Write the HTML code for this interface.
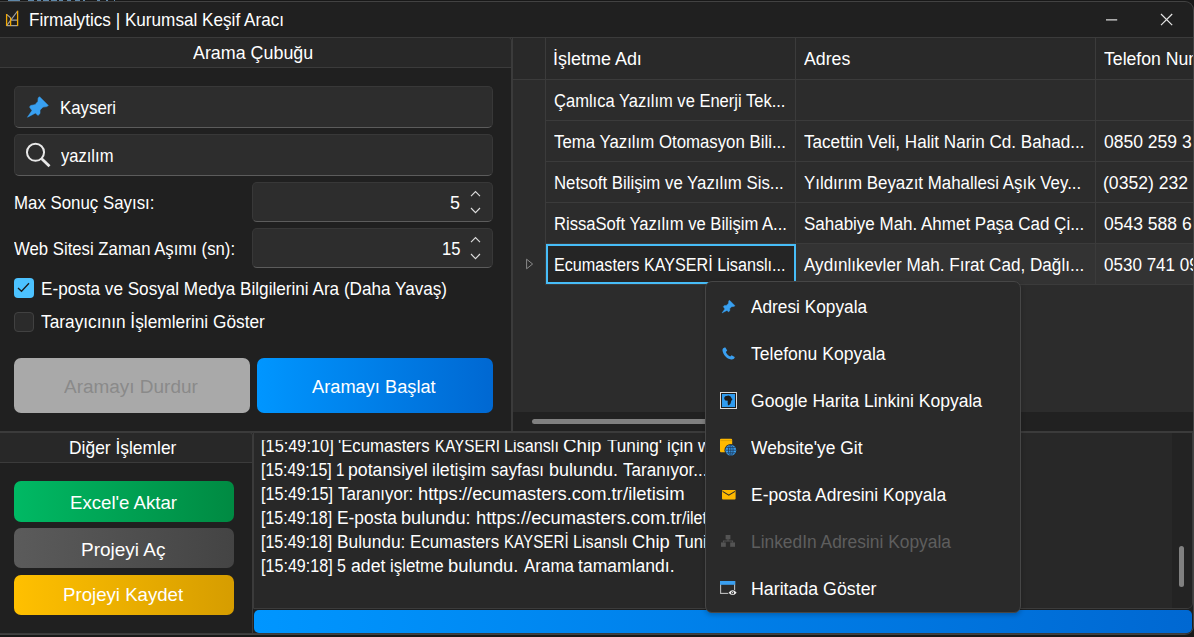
<!DOCTYPE html>
<html lang="tr"><head><meta charset="utf-8"><title>Firmalytics | Kurumsal Keşif Aracı</title>
<style>
html,body{margin:0;padding:0;background:#181818;overflow:hidden}
body{width:1194px;height:637px;position:relative;font-family:"Liberation Sans",sans-serif}
#win{position:absolute;left:0;top:1px;width:1194px;height:634px;box-sizing:border-box;background:#202020;overflow:hidden;border:1px solid #424242;border-left:none;border-radius:0 9px 9px 0}
#win>div,#win div,#menu div{position:absolute;box-sizing:border-box}
.t{position:absolute;white-space:pre;line-height:1;transform-origin:0 0;display:block}
svg{position:absolute;overflow:visible}
.inp{background:#2d2d2d;border:1px solid #383838;border-bottom-color:#5c5c5c;border-radius:5px}
.btn{border-radius:7px}
#menu{position:absolute;left:705px;top:281px;width:316px;height:332px;background:#2a2a2a;border:1px solid #464646;border-radius:7px;box-sizing:border-box;box-shadow:0 2px 5px rgba(0,0,0,.22)}
</style></head><body>
<i style="position:absolute;left:8px;top:0;width:12px;height:1px;background:#5f87a8"></i><i style="position:absolute;left:28px;top:0;width:6px;height:1px;background:#5f87a8"></i><i style="position:absolute;left:37px;top:0;width:4px;height:1px;background:#5f87a8"></i><i style="position:absolute;left:43px;top:0;width:6px;height:1px;background:#5f87a8"></i><i style="position:absolute;left:51px;top:0;width:6px;height:1px;background:#5f87a8"></i><i style="position:absolute;left:59px;top:0;width:4px;height:1px;background:#5f87a8"></i><i style="position:absolute;left:67px;top:0;width:4px;height:1px;background:#5f87a8"></i><i style="position:absolute;left:75px;top:0;width:5px;height:1px;background:#5f87a8"></i><i style="position:absolute;left:83px;top:0;width:2px;height:1px;background:#5f87a8"></i><i style="position:absolute;left:97px;top:0;width:3px;height:1px;background:#5f87a8"></i><i style="position:absolute;left:106px;top:0;width:2px;height:1px;background:#5f87a8"></i><i style="position:absolute;left:114px;top:0;width:1px;height:1px;background:#5f87a8"></i>
<div id="win">
<div style="left:0px;top:35px;width:1193px;height:1px;background:#3b3b3b"></div>
<svg style="left:5px;top:7px" width="16" height="19" viewBox="5 9 16 19">
<g fill="none" stroke-width="1.2">
<path d="M6.6 14.4 L10.6 17.8 M17.6 11 L6.8 25.4 M10.6 20.2 H17.6 M6.6 25.7 H17.6" stroke="#a0a0a0"/>
<path d="M6.6 14 V26 M10.6 17.4 V26 M17.6 10.8 V26" stroke="#f2a900" stroke-width="1.3"/>
</g></svg>
<span class="t" style="left:28.59px;top:9.00px;font-size:18.2px;color:#ffffff;transform:scaleX(0.9427)">Firmalytics | Kurumsal Keşif Aracı</span><svg style="left:1100px;top:8px" width="80" height="20" viewBox="1100 10 80 20">
<path d="M1106 19.8 H1117.2" stroke="#d8d8d8" stroke-width="1.3" fill="none"/>
<path d="M1161 14 L1172.2 25.2 M1172.2 14 L1161 25.2" stroke="#e4e4e4" stroke-width="1.2" fill="none"/>
</svg>
<div style="left:-2px;top:35px;width:514px;height:31px;background:#282828;border:1px solid #3b3b3b;border-radius:0 4px 0 0;border-left:none"></div>
<div style="left:511px;top:42px;width:1px;height:388px;background:#3b3b3b"></div>
<div style="left:512px;top:36px;width:1px;height:394px;background:#3b3b3b"></div>
<span class="t" style="left:192.97px;top:42.00px;font-size:18.2px;color:#ffffff;transform:scaleX(0.9827)">Arama Çubuğu</span><div class="inp" style="left:14px;top:84px;width:479px;height:42px;"></div>
<div class="inp" style="left:14px;top:132px;width:479px;height:42px;"></div>
<div class="inp" style="left:252px;top:180px;width:241px;height:40px;"></div>
<div class="inp" style="left:252px;top:226px;width:241px;height:40px;"></div>
<svg style="left:27px;top:94px" width="22" height="22" viewBox="0 0 22 22"><polygon points="12.5,0.7 21.3,9.5 19.7,10.6 16.0,11.1 13.0,14.0 13.0,17.5 10.9,19.4 8.5,17.0 0.5,21.2 5.0,14.6 2.6,11.1 3.7,9.5 8.0,8.7 10.9,5.5 11.2,2.0" fill="#38a0f1" stroke="#38a0f1" stroke-width="0.6" stroke-linejoin="round"/></svg>
<span class="t" style="left:59.92px;top:97.00px;font-size:18.2px;color:#ffffff;transform:scaleX(0.9251)">Kayseri</span><svg style="left:24px;top:138px" width="30" height="30" viewBox="24 140 30 30">
<circle cx="35.5" cy="152.3" r="8.55" fill="none" stroke="#e8e8e8" stroke-width="2"/>
<path d="M41.7 158.8 L49.5 166.3" stroke="#e8e8e8" stroke-width="2.8"/>
</svg>
<span class="t" style="left:60.96px;top:145.00px;font-size:18.2px;color:#ffffff;transform:scaleX(0.9101)">yazılım</span><span class="t" style="left:13.92px;top:192.00px;font-size:18.2px;color:#ffffff;transform:scaleX(0.9260)">Max Sonuç Sayısı:</span><span class="t" style="left:13.93px;top:238.00px;font-size:18.2px;color:#ffffff;transform:scaleX(0.9204)">Web Sitesi Zaman Aşımı (sn):</span><span class="t" style="left:450.08px;top:192.00px;font-size:18.2px;color:#ffffff;transform:scaleX(0.9847)">5</span><span class="t" style="left:441.54px;top:238.00px;font-size:18.2px;color:#ffffff;transform:scaleX(0.9124)">15</span><svg style="left:468px;top:188px" width="16" height="24" viewBox="0 0 16 24">
<path d="M3 6.2 L7.5 1.6 L12 6.2 M3 18 L7.5 22.6 L12 18" fill="none" stroke="#dcdcdc" stroke-width="1.15"/>
</svg>
<svg style="left:468px;top:234px" width="16" height="24" viewBox="0 0 16 24">
<path d="M3 6.2 L7.5 1.6 L12 6.2 M3 18 L7.5 22.6 L12 18" fill="none" stroke="#dcdcdc" stroke-width="1.15"/>
</svg>
<div style="left:14px;top:276px;width:20px;height:20px;background:#4cc2ff;border-radius:4px"></div>
<svg style="left:14px;top:276px" width="20" height="20" viewBox="0 0 20 20">
<path d="M4 10 L7.5 13.3 L15 5.3" fill="none" stroke="#1a1a1a" stroke-width="1.3"/></svg>
<div style="left:14px;top:310px;width:20px;height:20px;background:#2b2b2b;border:1px solid #414141;border-radius:4px"></div>
<span class="t" style="left:40.79px;top:278.00px;font-size:18.2px;color:#ffffff;transform:scaleX(0.9422)">E-posta ve Sosyal Medya Bilgilerini Ara (Daha Yavaş)</span><span class="t" style="left:41.41px;top:311.00px;font-size:18.2px;color:#ffffff;transform:scaleX(0.9506)">Tarayıcının İşlemlerini Göster</span><div class="btn" style="left:14px;top:356.4px;width:235.5px;height:54.4px;background:#a9a9a9"></div>
<span class="t" style="left:64.16px;top:376.00px;font-size:18.8px;color:#8a8a8a;transform:scaleX(1.0097)">Aramayı Durdur</span><div class="btn" style="left:256.5px;top:356.4px;width:236px;height:54.4px;background:linear-gradient(90deg,#0096ff,#0068d2)"></div>
<span class="t" style="left:311.56px;top:376.00px;font-size:18.8px;color:#ffffff;transform:scaleX(0.9711)">Aramayı Başlat</span><div style="left:513px;top:36px;width:680px;height:374px;background:#2c2c2c"></div>
<div style="left:513px;top:36px;width:680px;height:41px;background:#292929"></div>
<div style="left:546px;top:242px;width:647px;height:40px;background:#333333"></div>
<div style="left:513px;top:77px;width:680px;height:1px;background:#3b3b3b"></div>
<div style="left:546px;top:118px;width:647px;height:1px;background:#3b3b3b"></div>
<div style="left:546px;top:159px;width:647px;height:1px;background:#3b3b3b"></div>
<div style="left:546px;top:200px;width:647px;height:1px;background:#3b3b3b"></div>
<div style="left:546px;top:241px;width:647px;height:1px;background:#3b3b3b"></div>
<div style="left:546px;top:282px;width:647px;height:1px;background:#3b3b3b"></div>
<div style="left:545px;top:36px;width:1px;height:247px;background:#3b3b3b"></div>
<div style="left:795px;top:36px;width:1px;height:247px;background:#3b3b3b"></div>
<div style="left:1095px;top:36px;width:1px;height:247px;background:#3b3b3b"></div>
<div style="left:546px;top:242px;width:249.5px;height:40px;background:#252525;border:2px solid #47bdf8"></div>
<svg style="left:524px;top:254px" width="12" height="16" viewBox="524 256 12 16">
<path d="M526.6 259.2 L532.6 264 L526.6 268.8 Z" fill="none" stroke="#8a8a8a" stroke-width="1"/></svg>
<span class="t" style="left:552.54px;top:48.00px;font-size:18px;color:#ffffff;transform:scaleX(0.9980)">İşletme Adı</span><span class="t" style="left:803.97px;top:48.00px;font-size:18px;color:#ffffff;transform:scaleX(0.9839)">Adres</span><span class="t" style="left:1103.90px;top:48.00px;font-size:18px;color:#ffffff;transform:scaleX(0.9800)">Telefon Num</span><span class="t" style="left:553.56px;top:90.00px;font-size:18px;color:#ffffff;transform:scaleX(0.9181)">Çamlıca Yazılım ve Enerji Tek...</span><span class="t" style="left:554.02px;top:131.00px;font-size:18px;color:#ffffff;transform:scaleX(0.9335)">Tema Yazılım Otomasyon Bili...</span><span class="t" style="left:804.02px;top:131.00px;font-size:18px;color:#ffffff;transform:scaleX(0.9505)">Tacettin Veli, Halit Narin Cd. Bahad...</span><span class="t" style="left:1103.52px;top:131.00px;font-size:18px;color:#ffffff;transform:scaleX(0.9740)">0850 259 3</span><span class="t" style="left:554.12px;top:172.00px;font-size:18px;color:#ffffff;transform:scaleX(0.9326)">Netsoft Bilişim ve Yazılım Sis...</span><span class="t" style="left:804.03px;top:172.00px;font-size:18px;color:#ffffff;transform:scaleX(0.9372)">Yıldırım Beyazıt Mahallesi Aşık Vey...</span><span class="t" style="left:1103.11px;top:172.00px;font-size:18px;color:#ffffff;transform:scaleX(0.9770)">(0352) 232</span><span class="t" style="left:554.14px;top:213.00px;font-size:18px;color:#ffffff;transform:scaleX(0.9230)">RissaSoft Yazılım ve Bilişim A...</span><span class="t" style="left:803.63px;top:213.00px;font-size:18px;color:#ffffff;transform:scaleX(0.9433)">Sahabiye Mah. Ahmet Paşa Cad Çi...</span><span class="t" style="left:1103.52px;top:213.00px;font-size:18px;color:#ffffff;transform:scaleX(0.9740)">0543 588 6</span><span class="t" style="left:554.17px;top:254.00px;font-size:18px;color:#ffffff;transform:scaleX(0.8985)">Ecumasters KAYSERİ Lisanslı...</span><span class="t" style="left:804.37px;top:254.00px;font-size:18px;color:#ffffff;transform:scaleX(0.9505)">Aydınlıkevler Mah. Fırat Cad, Dağlı...</span><span class="t" style="left:1103.53px;top:254.00px;font-size:18px;color:#ffffff;transform:scaleX(0.9467)">0530 741 09</span><div style="left:513px;top:410px;width:680px;height:20px;background:#212121"></div>
<div style="left:532px;top:417px;width:420px;height:5px;background:#808080;border-radius:3px"></div>
<div style="left:0px;top:429px;width:1193px;height:2px;background:#3b3b3b"></div>
<div style="left:-2px;top:430px;width:255px;height:31px;background:#282828;border:1px solid #3b3b3b;border-radius:0 4px 0 0;border-left:none"></div>
<div style="left:252px;top:438px;width:1px;height:193px;background:#3b3b3b"></div>
<span class="t" style="left:69.17px;top:437.00px;font-size:18.2px;color:#ffffff;transform:scaleX(0.9575)">Diğer İşlemler</span><div class="btn" style="left:14px;top:479px;width:220px;height:41px;background:linear-gradient(90deg,#00b964,#008a42)"></div>
<div class="btn" style="left:14px;top:526px;width:220px;height:40px;background:linear-gradient(90deg,#5b5b5b,#444444)"></div>
<div class="btn" style="left:14px;top:572.5px;width:220px;height:40.5px;background:linear-gradient(90deg,#ffc000,#d69d00)"></div>
<span class="t" style="left:70.07px;top:492.00px;font-size:18.6px;color:#ffffff;transform:scaleX(1.0012)">Excel'e Aktar</span><span class="t" style="left:81.44px;top:539.00px;font-size:18.6px;color:#ffffff;transform:scaleX(1.0214)">Projeyi Aç</span><span class="t" style="left:62.97px;top:584.00px;font-size:18.6px;color:#ffffff;transform:scaleX(1.0023)">Projeyi Kaydet</span><div style="left:253px;top:430px;width:940px;height:177px;background:#282828;border:1px solid #3b3b3b;border-radius:0 0 6px 0"></div>
<div style="left:1172px;top:431px;width:20px;height:175px;background:#232323;border-radius:0 0 5px 0"></div>
<div style="left:1179px;top:544px;width:5px;height:41px;background:#808080;border-radius:3px"></div>
<div style="left:0;top:438px;width:1172px;height:168px;overflow:hidden"><span class="t" style="left:261.14px;top:-3.00px;font-size:18px;color:#ffffff;transform:scaleX(0.9078)">[15:49:10] </span><span class="t" style="left:338.35px;top:-3.00px;font-size:18px;color:#ffffff;transform:scaleX(0.9295)">'Ecumasters </span><span class="t" style="left:434.65px;top:-3.00px;font-size:18px;color:#ffffff;transform:scaleX(0.8457)">KAYSERİ </span><span class="t" style="left:503.67px;top:-3.00px;font-size:18px;color:#ffffff;transform:scaleX(0.8995)">Lisanslı </span><span class="t" style="left:562.95px;top:-3.00px;font-size:18px;color:#ffffff;transform:scaleX(1.0404)">Chip </span><span class="t" style="left:606.71px;top:-3.00px;font-size:18px;color:#ffffff;transform:scaleX(0.9526)">Tuning' </span><span class="t" style="left:666.53px;top:-3.00px;font-size:18px;color:#ffffff;transform:scaleX(0.9712)">için </span><span class="t" style="left:697.63px;top:-3.00px;font-size:18px;color:#ffffff;transform:scaleX(0.9870)">w</span><span class="t" style="left:261.17px;top:21.00px;font-size:18px;color:#ffffff;transform:scaleX(0.8830)">[15:49:15] </span><span class="t" style="left:336.35px;top:21.00px;font-size:18px;color:#ffffff;transform:scaleX(0.8400)">1 </span><span class="t" style="left:347.66px;top:21.00px;font-size:18px;color:#ffffff;transform:scaleX(0.9837)">potansiyel </span><span class="t" style="left:432.32px;top:21.00px;font-size:18px;color:#ffffff;transform:scaleX(0.9796)">iletişim </span><span class="t" style="left:491.13px;top:21.00px;font-size:18px;color:#ffffff;transform:scaleX(0.9284)">sayfası </span><span class="t" style="left:548.64px;top:21.00px;font-size:18px;color:#ffffff;transform:scaleX(0.9983)">bulundu. </span><span class="t" style="left:622.62px;top:21.00px;font-size:18px;color:#ffffff;transform:scaleX(0.9494)">Taranıyor...</span><span class="t" style="left:261.15px;top:45.00px;font-size:18px;color:#ffffff;transform:scaleX(0.8991)">[15:49:15] </span><span class="t" style="left:337.62px;top:45.00px;font-size:18px;color:#ffffff;transform:scaleX(0.9407)">Taranıyor: </span><span class="t" style="left:417.53px;top:45.00px;font-size:18px;color:#ffffff;transform:scaleX(1.0168)">https:</span><span class="t" style="left:462.30px;top:45.00px;font-size:18px;color:#ffffff;transform:scaleX(1.0168)">//ecumasters.com.tr</span><span class="t" style="left:623.00px;top:45.00px;font-size:18px;color:#ffffff;transform:scaleX(1.0250)">/iletisim</span><span class="t" style="left:261.16px;top:69.00px;font-size:18px;color:#ffffff;transform:scaleX(0.8878)">[15:49:18] </span><span class="t" style="left:336.58px;top:69.00px;font-size:18px;color:#ffffff;transform:scaleX(0.9651)">E-posta </span><span class="t" style="left:401.23px;top:69.00px;font-size:18px;color:#ffffff;transform:scaleX(1.0072)">bulundu: </span><span class="t" style="left:475.83px;top:69.00px;font-size:18px;color:#ffffff;transform:scaleX(1.0214)">https:</span><span class="t" style="left:520.80px;top:69.00px;font-size:18px;color:#ffffff;transform:scaleX(1.0174)">//ecumasters.com.tr</span><span class="t" style="left:681.60px;top:69.00px;font-size:18px;color:#ffffff;transform:scaleX(0.8930)">/ilet</span><span class="t" style="left:261.16px;top:93.00px;font-size:18px;color:#ffffff;transform:scaleX(0.8878)">[15:49:18] </span><span class="t" style="left:336.58px;top:93.00px;font-size:18px;color:#ffffff;transform:scaleX(0.9624)">Bulundu: </span><span class="t" style="left:409.82px;top:93.00px;font-size:18px;color:#ffffff;transform:scaleX(0.9377)">Ecumasters </span><span class="t" style="left:503.75px;top:93.00px;font-size:18px;color:#ffffff;transform:scaleX(0.8433)">KAYSERİ </span><span class="t" style="left:572.58px;top:93.00px;font-size:18px;color:#ffffff;transform:scaleX(0.8964)">Lisanslı </span><span class="t" style="left:631.67px;top:93.00px;font-size:18px;color:#ffffff;transform:scaleX(1.0187)">Chip </span><span class="t" style="left:674.53px;top:93.00px;font-size:18px;color:#ffffff;transform:scaleX(0.9193)">Tuni</span><span class="t" style="left:261.15px;top:117.00px;font-size:18px;color:#ffffff;transform:scaleX(0.8957)">[15:49:18] </span><span class="t" style="left:337.36px;top:117.00px;font-size:18px;color:#ffffff;transform:scaleX(0.8898)">5 </span><span class="t" style="left:350.65px;top:117.00px;font-size:18px;color:#ffffff;transform:scaleX(0.9806)">adet </span><span class="t" style="left:389.97px;top:117.00px;font-size:18px;color:#ffffff;transform:scaleX(0.9391)">işletme </span><span class="t" style="left:448.12px;top:117.00px;font-size:18px;color:#ffffff;transform:scaleX(1.0198)">bulundu. </span><span class="t" style="left:523.67px;top:117.00px;font-size:18px;color:#ffffff;transform:scaleX(0.9422)">Arama </span><span class="t" style="left:578.33px;top:117.00px;font-size:18px;color:#ffffff;transform:scaleX(0.9750)">tamamlandı.</span></div>
<div style="left:0px;top:631px;width:1193px;height:1px;background:#3b3b3b"></div>
<div style="left:253.7px;top:607.8px;width:938.5px;height:23.4px;background:linear-gradient(90deg,#0096ff,#0068d2);border-radius:5px"></div>
</div>
<div id="menu">
<span class="t" style="left:45.47px;top:17.00px;font-size:17.6px;color:#ffffff;transform:scaleX(0.9813)">Adresi Kopyala</span><span class="t" style="left:45.11px;top:64.00px;font-size:17.6px;color:#ffffff;transform:scaleX(0.9970)">Telefonu Kopyala</span><span class="t" style="left:44.62px;top:111.00px;font-size:17.6px;color:#ffffff;transform:scaleX(0.9969)">Google Harita Linkini Kopyala</span><span class="t" style="left:45.42px;top:158.00px;font-size:17.6px;color:#ffffff;transform:scaleX(0.9907)">Website'ye Git</span><span class="t" style="left:45.17px;top:205.00px;font-size:17.6px;color:#ffffff;transform:scaleX(0.9926)">E-posta Adresini Kopyala</span><span class="t" style="left:45.17px;top:252.00px;font-size:17.6px;color:#5e5e5e;transform:scaleX(0.9874)">LinkedIn Adresini Kopyala</span><span class="t" style="left:45.14px;top:299.00px;font-size:17.6px;color:#ffffff;transform:scaleX(1.0102)">Haritada Göster</span><svg style="left:16px;top:18px" width="13" height="13" viewBox="0 0 13 13"><polygon points="7.50,0.20 13.00,5.70 12.00,6.39 9.69,6.70 7.81,8.51 7.81,10.70 6.50,11.89 5.00,10.39 0.00,13.01 2.81,8.89 1.31,6.70 2.00,5.70 4.69,5.20 6.50,3.20 6.69,1.01" fill="#38a0f1" stroke="#38a0f1" stroke-width="0.4" stroke-linejoin="round"/></svg>
<svg style="left:16px;top:65px" width="13" height="13" viewBox="0 0 13 13"><path d="M2.6 0.4 C1.2 0.8 0.3 1.8 0.5 3.4 C1 7.6 4.6 11.6 9.2 12.5 C10.8 12.8 12.2 12 12.7 10.6 L12.7 9.9 L9.6 8.2 L8.2 9.4 C6.4 8.6 4.6 6.8 3.9 4.9 L5.2 3.6 L3.4 0.4 Z" fill="#3a9ff0"/></svg>
<svg style="left:14px;top:110px" width="17" height="17" viewBox="0 0 17 17"><rect x="0.5" y="0.5" width="16" height="16" fill="#1c1c1c" stroke="#dcdcdc" stroke-width="1"/><rect x="2" y="2" width="13" height="13" fill="#2f9bef"/><path d="M5.2 4.2 L8.6 3.6 L10.6 4.6 L11.8 6.8 L12.6 6.9 L11.2 9 L10.6 11.6 L9 13.2 L8 13.2 L7.6 10.4 L7.8 8.8 L5.4 8.6 L4.2 7 L4.4 5.2 Z" fill="#1c1c1c"/></svg>
<svg style="left:14px;top:156px" width="17" height="18" viewBox="0 0 17 18"><path d="M1 0.8 H11 A1.2 1.2 0 0 1 12.2 2 V14.2 H1 A1 1 0 0 1 0 13.2 V1.8 A1 1 0 0 1 1 0.8 Z" fill="#ffb900"/><path d="M0.4 2.6 H12" stroke="#d89c00" stroke-width="0.8"/><circle cx="10.8" cy="12.2" r="6.3" fill="#2b2b2b"/><circle cx="10.8" cy="12.2" r="5.4" fill="#3a9ff0"/><g fill="none" stroke="#1e3a5a" stroke-width="0.8"><ellipse cx="10.8" cy="12.2" rx="2.3" ry="5.2"/><path d="M5.6 12.2 H16 M10.8 7 V17.4 M6.4 9.6 H15.2 M6.4 14.8 H15.2"/></g></svg>
<svg style="left:15.5px;top:207.5px" width="14" height="10" viewBox="0 0 14 10"><rect x="0" y="0" width="13.6" height="9.6" rx="1" fill="#ffb900"/><path d="M0.6 1.4 L6.8 5.2 L13 1.4" fill="none" stroke="#2b2b2b" stroke-width="1.1"/></svg>
<svg style="left:15px;top:253px" width="14" height="12" viewBox="0 0 14 12"><g fill="#545454"><rect x="4.6" y="0" width="4.8" height="4.4"/><rect x="0" y="7.4" width="4.8" height="4.4"/><rect x="9.2" y="7.4" width="4.8" height="4.4"/><path d="M6.5 4 h1 v1.6 h4.6 v2 h-1 v-1 h-8.2 v1 h-1 v-2 h4.6 Z"/></g></svg>
<svg style="left:14px;top:299px" width="18" height="17" viewBox="0 0 18 17"><rect x="0.6" y="0.6" width="14" height="11.8" fill="none" stroke="#bdbdbd" stroke-width="1.1"/><rect x="0" y="0" width="15.2" height="3.8" fill="#3a9ff0"/><path d="M7.4 11.7 Q12.6 5.2 17.8 11.7 Q12.6 18.2 7.4 11.7 Z" fill="#2b2b2b"/><path d="M8.6 11.7 Q12.6 6.9 16.6 11.7 Q12.6 16.5 8.6 11.7 Z" fill="#f2f2f2"/><circle cx="12.6" cy="11.7" r="1.5" fill="#2b2b2b"/><circle cx="12.6" cy="11.7" r="0.6" fill="#f2f2f2"/></svg>
</div>
</body></html>
